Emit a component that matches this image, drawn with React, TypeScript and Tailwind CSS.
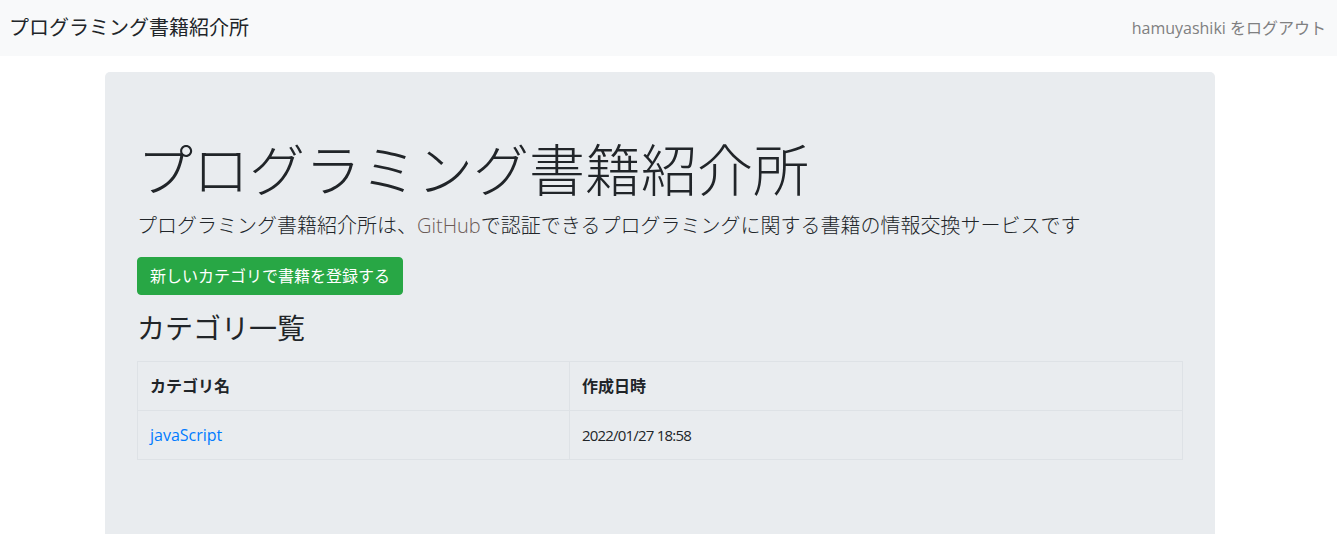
import React from "react";

const font = { fontFamily: '"Open Sans", "Noto Sans CJK JP", sans-serif' };

const categories = [{ name: "javaScript", createdAt: "2022/01/27 18:58" }];

const App: React.FC = () => {
  return (
    <div className="min-h-screen bg-white text-[#212529]" style={font}>
      {/* ナビバー */}
      <nav className="h-14 bg-[#f8f9fa] flex items-center justify-between pl-[9px] pr-[11px]">
        <a href="#" className="text-[20px] leading-[30px] text-[#212529]">
          プログラミング書籍紹介所
        </a>
        <a href="#" className="text-[16px] leading-6 text-[#7f8081]">
          hamuyashiki をログアウト
        </a>
      </nav>

      {/* ジャンボトロン */}
      <div className="pr-[17px]">
        <div className="w-[1110px] mx-auto mt-4 rounded-[5px] bg-[#e9ecef] px-8 pt-16 pb-16">
          <h1 className="text-[56px] leading-[67px] font-light mb-2">プログラミング書籍紹介所</h1>
          <p className="text-[20px] leading-[30px] font-light mb-4">
            プログラミング書籍紹介所は、<a href="#" className="text-[#6b5b57]">GitHub</a>
            で認証できるプログラミングに関する書籍の情報交換サービスです
          </p>
          <button className="h-[38px] px-3 rounded-[4px] bg-[#28a745] text-white text-[16px] leading-6 border border-[#28a745]">
            新しいカテゴリで書籍を登録する
          </button>
          <h3 className="mt-4 mb-4 text-[28px] leading-[34px]">カテゴリ一覧</h3>

          <table className="w-full mb-4 border-collapse border border-[#dee2e6] text-[16px]">
            <thead>
              <tr>
                <th className="w-[432px] border border-[#dee2e6] px-3 py-3 text-left font-bold leading-6">
                  カテゴリ名
                </th>
                <th className="border border-[#dee2e6] px-3 py-3 text-left font-bold leading-6">作成日時</th>
              </tr>
            </thead>
            <tbody>
              {categories.map((c) => (
                <tr key={c.name}>
                  <td className="border border-[#dee2e6] px-3 py-3 leading-6">
                    <a href="#" className="text-[#007bff]">{c.name}</a>
                  </td>
                  <td className="border border-[#dee2e6] px-3 py-3 leading-6 text-[15px] tracking-[-0.8px]">
                    {c.createdAt}
                  </td>
                </tr>
              ))}
            </tbody>
          </table>
        </div>
      </div>
    </div>
  );
};

export default App;
